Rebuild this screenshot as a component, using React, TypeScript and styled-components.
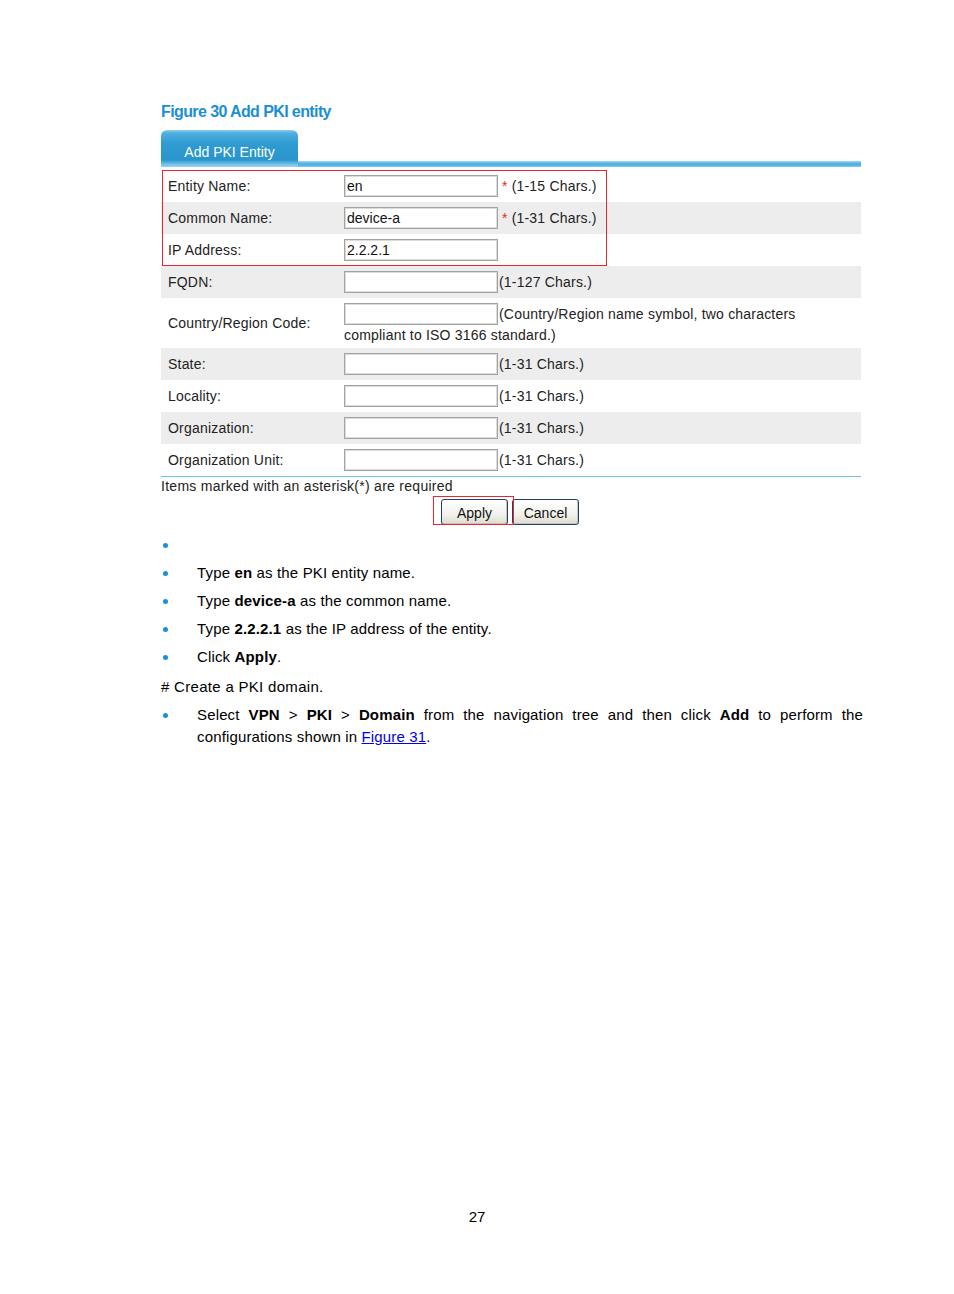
import React from 'react';
import styled, { createGlobalStyle } from 'styled-components';

const GlobalStyle = createGlobalStyle`
  html, body {
    margin: 0;
    padding: 0;
    background: #ffffff;
  }
`;

const Page = styled.div`
  width: 954px;
  height: 1294px;
  box-sizing: border-box;
  padding: 100px 0 0 161px;
  display: flex;
  flex-direction: column;
  font-family: "Liberation Sans", Arial, sans-serif;
  color: #000;
`;

const Caption = styled.div`
  font-size: 16px;
  font-weight: bold;
  letter-spacing: -0.6px;
  line-height: 22px;
  color: #1a8fd6;
  margin-top: 1px;
  margin-bottom: 7px;
`;

const Panel = styled.div`
  width: 700px;
`;

const TabStrip = styled.div`
  display: flex;
  align-items: flex-end;
  height: 37px;
`;

const Tab = styled.div`
  width: 137px;
  height: 37px;
  box-sizing: border-box;
  padding-top: 13px;
  border-radius: 6px 6px 0 0;
  background: linear-gradient(#8fd0ee 0px, #4fb0de 3px, #2e9bd2 14px, #2a95cc 30px, #6cbfe6 34px, #9dd3ef 37px);
  color: #fff;
  font-size: 14px;
  line-height: 18px;
  text-align: center;
`;

const TabBar = styled.div`
  flex: 1;
  height: 6px;
  background: linear-gradient(#a8dbf3 0px, #5db7e4 2px, #4aaede 4px, #8ccdee 6px);
`;

const Form = styled.div`
  position: relative;
  margin-top: 3px;
  border-bottom: 1px solid #6fc0ec;
`;

const Row = styled.div<{ shaded?: boolean; tall?: boolean }>`
  display: grid;
  grid-template-columns: 183px 1fr;
  align-items: center;
  min-height: ${props => (props.tall ? '49px' : '32px')};
  background: ${props => (props.shaded ? '#ededed' : '#ffffff')};
  font-size: 14px;
  letter-spacing: 0.2px;
  color: #222;
`;

const Label = styled.div`
  padding-left: 7px;
`;

const Value = styled.div`
  display: flex;
  align-items: center;
`;

const WrapValue = styled.div`
  padding: 5px 0 3px;
`;

const ValueLine = styled.div`
  display: flex;
  align-items: center;
  height: 22px;
`;

const SecondLine = styled.div`
  line-height: 20px;
`;

const Input = styled.div`
  width: 154px;
  height: 22px;
  box-sizing: border-box;
  border: 1px solid #a3a3a3;
  box-shadow: inset 0 0 0 1px #dcdcdc;
  background: #fff;
  padding-left: 2px;
  font-size: 14px;
  line-height: 20px;
  letter-spacing: 0;
  color: #111;
`;

const Hint = styled.span`
  margin-left: 1px;
  white-space: nowrap;
`;

const Required = styled.span`
  margin-left: 4px;
  white-space: nowrap;
  &::before {
    content: '*';
    color: #e8262b;
    margin-right: 4px;
  }
`;

const Highlight = styled.div<{ top: number; left: number; width: number; height: number }>`
  position: absolute;
  top: ${props => props.top}px;
  left: ${props => props.left}px;
  width: ${props => props.width}px;
  height: ${props => props.height}px;
  box-sizing: border-box;
  border: 1.5px solid #e8262b;
  pointer-events: none;
`;

const Note = styled.div`
  font-size: 14px;
  line-height: 19px;
  letter-spacing: 0.28px;
  color: #222;
`;

const Buttons = styled.div`
  display: flex;
  justify-content: center;
  gap: 4px;
  margin-top: 3px;
  padding-right: 2px;
`;

const ButtonWrap = styled.div`
  position: relative;
`;

const Button = styled.div`
  width: 67px;
  height: 26px;
  box-sizing: border-box;
  border: 1px solid #1f3f6e;
  border-radius: 3px;
  background: linear-gradient(#ffffff, #f2f2ec 60%, #dedbd0);
  box-shadow: inset -1px -1px 0 #c8c4b8;
  font-size: 14px;
  line-height: 26px;
  text-align: center;
  color: #111;
`;

const List = styled.ul<{ first?: boolean }>`
  list-style: none;
  margin: ${props => (props.first ? '9px' : '0')} 0 0;
  padding: 0;
  width: 702px;
  font-size: 15px;
  letter-spacing: 0.15px;
  line-height: 22px;
`;

const Item = styled.li`
  position: relative;
  padding-left: 36px;
  margin-bottom: 6px;
  min-height: 22px;
  text-align: justify;
  &::before {
    content: '';
    position: absolute;
    left: 2px;
    top: 9px;
    width: 5px;
    height: 5px;
    border-radius: 50%;
    background: #1e8ed8;
  }
`;

const Para = styled.p`
  margin: 2px 0 6px;
  font-size: 15px;
  letter-spacing: 0.3px;
  line-height: 22px;
`;

const Link = styled.a`
  color: #0000ee;
  text-decoration: underline;
`;

const Footer = styled.div`
  margin-top: auto;
  width: 632px;
  padding-bottom: 66px;
  text-align: center;
  font-size: 15px;
  line-height: 22px;
`;

type Field = {
  label: string;
  value?: string;
  hint: string;
  required?: boolean;
};

const fields: Field[] = [
  { label: 'Entity Name:', value: 'en', hint: '(1-15 Chars.)', required: true },
  { label: 'Common Name:', value: 'device-a', hint: '(1-31 Chars.)', required: true },
  { label: 'IP Address:', value: '2.2.2.1', hint: '' },
  { label: 'FQDN:', hint: '(1-127 Chars.)' },
];

const lowerFields: Field[] = [
  { label: 'State:', hint: '(1-31 Chars.)' },
  { label: 'Locality:', hint: '(1-31 Chars.)' },
  { label: 'Organization:', hint: '(1-31 Chars.)' },
  { label: 'Organization Unit:', hint: '(1-31 Chars.)' },
];

function FieldRow({ field, shaded }: { field: Field; shaded: boolean }) {
  return (
    <Row shaded={shaded}>
      <Label>{field.label}</Label>
      <Value>
        <Input>{field.value}</Input>
        {field.required ? <Required>{field.hint}</Required> : field.hint && <Hint>{field.hint}</Hint>}
      </Value>
    </Row>
  );
}

export default function App() {
  return (
    <>
      <GlobalStyle />
      <Page>
        <Caption>Figure 30 Add PKI entity</Caption>
        <Panel>
          <TabStrip>
            <Tab>Add PKI Entity</Tab>
            <TabBar />
          </TabStrip>
          <Form>
            {fields.map((field, index) => (
              <FieldRow key={field.label} field={field} shaded={index % 2 === 1} />
            ))}
            <Row tall>
              <Label>Country/Region Code:</Label>
              <WrapValue>
                <ValueLine>
                  <Input />
                  <Hint>(Country/Region name symbol, two characters</Hint>
                </ValueLine>
                <SecondLine>compliant to ISO 3166 standard.)</SecondLine>
              </WrapValue>
            </Row>
            {lowerFields.map((field, index) => (
              <FieldRow key={field.label} field={field} shaded={index % 2 === 0} />
            ))}
            <Highlight top={0} left={1} width={445} height={96} />
          </Form>
          <Note>Items marked with an asterisk(*) are required</Note>
          <Buttons>
            <ButtonWrap>
              <Button>Apply</Button>
              <Highlight top={-3} left={-8} width={81} height={29} />
            </ButtonWrap>
            <Button>Cancel</Button>
          </Buttons>
        </Panel>
        <List first>
          <Item />
          <Item>Type <b>en</b> as the PKI entity name.</Item>
          <Item>Type <b>device-a</b> as the common name.</Item>
          <Item>Type <b>2.2.2.1</b> as the IP address of the entity.</Item>
          <Item>Click <b>Apply</b>.</Item>
        </List>
        <Para># Create a PKI domain.</Para>
        <List>
          <Item>
            Select <b>VPN</b> &gt; <b>PKI</b> &gt; <b>Domain</b> from the navigation tree and then click <b>Add</b>
            {' to perform the '}
            {'configurations shown in '}
            <Link href="#">Figure 31</Link>.
          </Item>
        </List>
        <Footer>27</Footer>
      </Page>
    </>
  );
}
